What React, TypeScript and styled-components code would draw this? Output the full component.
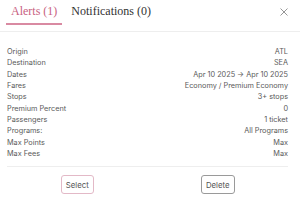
import React from "react";
import styled, { createGlobalStyle } from "styled-components";

const GlobalStyle = createGlobalStyle`
  html, body {
    margin: 0;
    padding: 0;
    background: #fff;
  }
  body {
    width: 300px;
    height: 214px;
    overflow: hidden;
  }
`;

const rows: [string, string][] = [
  ["Origin", "ATL"],
  ["Destination", "SEA"],
  ["Dates", "Apr 10 2025 \u2192 Apr 10 2025"],
  ["Fares", "Economy / Premium Economy"],
  ["Stops", "3+ stops"],
  ["Premium Percent", "0"],
  ["Passengers", "1 ticket"],
  ["Programs:", "All Programs"],
  ["Max Points", "Max"],
  ["Max Fees", "Max"],
];

export default function App() {
  return (
    <>
      <GlobalStyle />
      <Panel>
        <Header>
          <Tabs>
            <Tab $active>Alerts (1)</Tab>
            <Tab>Notifications (0)</Tab>
          </Tabs>
          <CloseButton aria-label="Close">
            <svg width="8" height="8" viewBox="0 0 8 8">
              <path d="M0.5 0.5 L7.5 7.5 M7.5 0.5 L0.5 7.5" stroke="#8a8a8a" strokeWidth="0.9" />
            </svg>
          </CloseButton>
        </Header>
        <Body>
          <Details>
            {rows.map(([label, value]) => (
              <Row key={label}>
                <span>{label}</span>
                <span>{value}</span>
              </Row>
            ))}
          </Details>
          <Actions>
            <ActionButton $variant="primary">Select</ActionButton>
            <ActionButton>Delete</ActionButton>
          </Actions>
        </Body>
      </Panel>
    </>
  );
}

const Panel = styled.div`
  width: 300px;
  height: 214px;
  display: flex;
  flex-direction: column;
  font-family: Inter, "Liberation Sans", sans-serif;
`;

const Header = styled.div`
  height: 31px;
  display: flex;
  align-items: stretch;
  justify-content: space-between;
  border-bottom: 1px solid #eeeeee;
  padding: 0 12px 0 6px;
`;

const Tabs = styled.div`
  display: flex;
  gap: 4px;
`;

const Tab = styled.div<{ $active?: boolean }>`
  font-family: "Liberation Serif", serif;
  font-size: 12px;
  line-height: 14px;
  padding: 4px 5px 0;
  height: 19px;
  color: ${(p) => (p.$active ? "#c8617f" : "#333")};
  border-bottom: 2px solid ${(p) => (p.$active ? "#d98aa2" : "transparent")};
`;

const CloseButton = styled.button`
  border: none;
  background: none;
  padding: 0;
  height: 23px;
  display: flex;
  align-items: center;
  cursor: pointer;
`;

const Body = styled.div`
  padding: 14px 12px 0 7px;
  display: flex;
  flex-direction: column;
`;

const Details = styled.div`
  padding-bottom: 7px;
  border-bottom: 1px solid #eeeeee;
`;

const Row = styled.div`
  display: flex;
  justify-content: space-between;
  font-size: 7.3px;
  line-height: 11.33px;
  color: #5a5a5a;
`;

const Actions = styled.div`
  display: grid;
  grid-template-columns: 1fr 1fr;
  justify-items: center;
  padding-top: 8px;
`;

const ActionButton = styled.button<{ $variant?: "primary" }>`
  font-family: Inter, "Liberation Sans", sans-serif;
  font-size: 7.8px;
  height: 19px;
  padding: 0 4px;
  color: #555;
  background: #fff;
  border: 1px solid ${(p) => (p.$variant === "primary" ? "#e3b9c7" : "#9a9a9a")};
  border-radius: 3px;
  cursor: pointer;
`;
